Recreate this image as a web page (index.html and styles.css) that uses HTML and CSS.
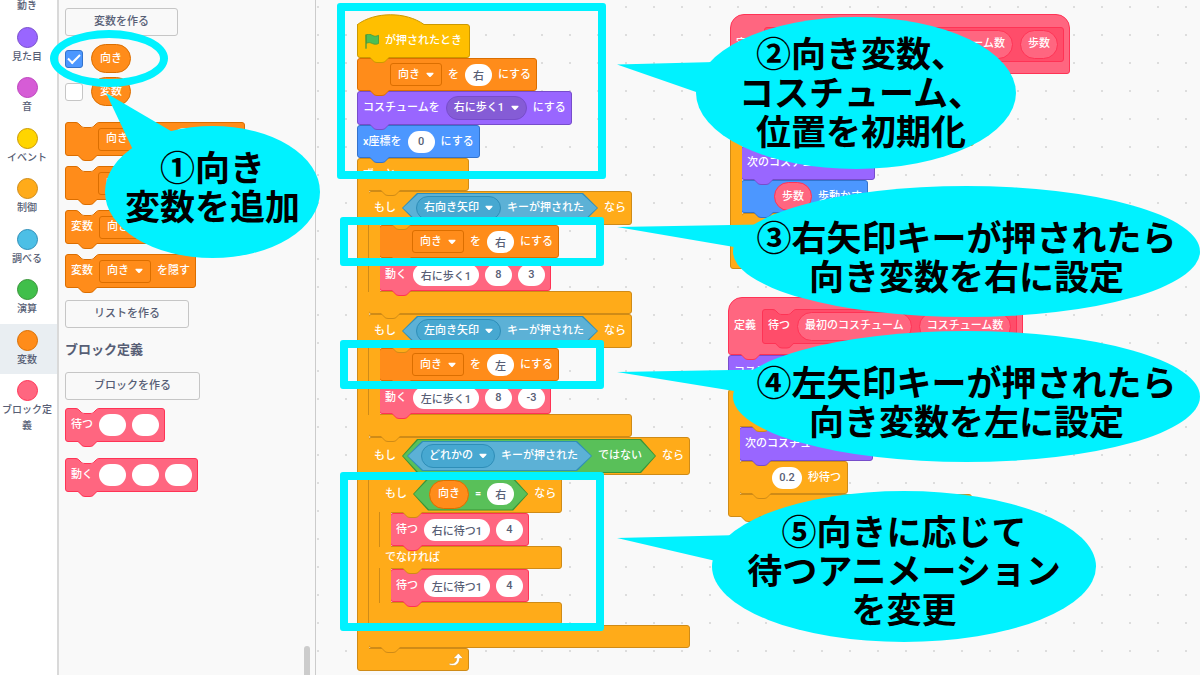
FILE: index.html
```html
<!DOCTYPE html>
<html lang="ja">
<head>
<meta charset="utf-8">
<meta name="viewport" content="width=device-width, initial-scale=1">
<title>変数とブロック定義</title>
<link rel="stylesheet" href="styles.css">
</head>
<body>
<svg class="defs" aria-hidden="true">
  <symbol id="arrow" viewBox="0 0 8 6"><path d="M1.2.8h5.6c.8 0 1 .7.5 1.200L4.700 4.700c-.4.4-1 .4-1.400 0L.7 2C.2 1.500.4.8 1.200.8z" fill="#fff"/></symbol>
  <symbol id="notch" viewBox="0 0 24 7"><path d="M0 0C2 0 3 1 4 2L6 4C7 5 8 6 10 6H15C17 6 18 5 19 4L21 2C22 1 23 .5 24 .5V0Z" fill="var(--hole)"/><path d="M0 .5C2 .5 3 1 4 2L6 4C7 5 8 5.500 10 5.500H15C17 5.500 18 5 19 4L21 2C22 1 23 .5 24 .5" fill="none" stroke="var(--line)"/></symbol>
</svg>
<div class="app">
  <nav class="categories">
    <a class="category" href="#motion"><span class="dot motion"></span>動き</a>
    <a class="category" href="#looks"><span class="dot looks"></span>見た目</a>
    <a class="category" href="#sound"><span class="dot sound"></span>音</a>
    <a class="category" href="#events"><span class="dot event"></span>イベント</a>
    <a class="category" href="#control"><span class="dot control"></span>制御</a>
    <a class="category" href="#sensing"><span class="dot sense"></span>調べる</a>
    <a class="category" href="#operators"><span class="dot operator"></span>演算</a>
    <a class="category selected" href="#data"><span class="dot data"></span>変数</a>
    <a class="category" href="#custom"><span class="dot custom"></span>ブロック定義</a>
  </nav>

  <aside class="palette">
    <button class="make" type="button">変数を作る</button>
    <div class="variables">
      <label class="variable"><input class="tick" type="checkbox" checked><span class="reporter data">向き</span></label>
      <label class="variable"><input class="tick" type="checkbox"><span class="reporter data">変数</span></label>
    </div>
    <div class="data-blocks">
      <div class="block data icon-space set"><svg class="notch"><use href="#notch"/></svg><span class="drop"><select aria-label="変数名"><option>向き</option></select><svg><use href="#arrow"/></svg></span><input class="slot" aria-label="値"></div>
      <div class="block data icon-space set"><svg class="notch"><use href="#notch"/></svg><span class="drop"><select aria-label="変数名"><option>向き</option></select><svg><use href="#arrow"/></svg></span></div>
      <div class="block data"><svg class="notch"><use href="#notch"/></svg><span>変数</span><span class="drop"><select aria-label="変数名"><option>向き</option></select><svg><use href="#arrow"/></svg></span></div>
      <div class="block data"><svg class="notch"><use href="#notch"/></svg><span>変数</span><span class="drop"><select aria-label="変数名"><option>向き</option></select><svg><use href="#arrow"/></svg></span><span>を隠す</span></div>
    </div>
    <button class="make" type="button">リストを作る</button>
    <h2 class="heading">ブロック定義</h2>
    <button class="make" type="button">ブロックを作る</button>
    <div class="custom-blocks">
      <div class="block custom"><svg class="notch"><use href="#notch"/></svg><span>待つ</span><input class="slot" aria-label="最初のコスチューム"><input class="slot" aria-label="コスチューム数"></div>
      <div class="block custom"><svg class="notch"><use href="#notch"/></svg><span>動く</span><input class="slot" aria-label="最初のコスチューム"><input class="slot" aria-label="コスチューム数"><input class="slot" aria-label="歩数"></div>
    </div>
    <span class="scrollbar"></span>
  </aside>

  <main class="workspace">
    <section class="script script-main">
      <div class="hat">
        <svg class="dome" viewBox="0 0 68 11"><path d="M.5 11V10.500C18-2.500 49-2.500 67 10.500V11Z" fill="#ffbf00"/><path d="M.5 11V10.500C18-2.500 49-2.500 67 10.500" fill="none" stroke="#cc9900"/></svg>
        <div class="block event"><svg class="flag" viewBox="0 0 14 15"><path d="M1 1C4-.5 6 .5 8 1.700c2 .8 3.500.6 5.500-.4v8.200c-2 1-4 1-6 .1-2-1-4-1.500-6-.3z" fill="#4cbf56" stroke="#45993d" stroke-width=".8"/><path d="M1 .8v13.400" stroke="#45993d" stroke-width="1.300" stroke-linecap="round"/></svg><span>が押されたとき</span></div>
      </div>
      <div class="block data icon-space"><span class="drop"><select aria-label="変数名"><option>向き</option></select><svg><use href="#arrow"/></svg></span><span>を</span><input class="slot" aria-label="値" value="右"><span>にする</span></div>
      <div class="block looks"><span>コスチュームを</span><span class="drop round"><select aria-label="コスチューム"><option>右に歩く1</option></select><svg><use href="#arrow"/></svg></span><span>にする</span></div>
      <div class="block motion"><span>x座標を</span><input class="slot" aria-label="x座標" value="0"><span>にする</span></div>

      <div class="wrap control">
        <div class="block control head"><span>ずっと</span></div>
        <div class="inside">
          <div class="wrap control">
            <div class="block control head if"><span>もし</span><span class="hex sense"><span class="drop round"><select aria-label="キー"><option>右向き矢印</option></select><svg><use href="#arrow"/></svg></span><span>キーが押された</span></span><span>なら</span></div>
            <div class="inside">
              <div class="block data icon-space"><span class="drop"><select aria-label="変数名"><option>向き</option></select><svg><use href="#arrow"/></svg></span><span>を</span><input class="slot" aria-label="値" value="右"><span>にする</span></div>
              <div class="block custom"><span>動く</span><input class="slot wide" aria-label="最初のコスチューム" value="右に歩く1"><input class="slot" aria-label="コスチューム数" value="8"><input class="slot" aria-label="歩数" value="3"></div>
            </div>
            <div class="block control foot"></div>
          </div>
          <div class="wrap control">
            <div class="block control head if"><span>もし</span><span class="hex sense"><span class="drop round"><select aria-label="キー"><option>左向き矢印</option></select><svg><use href="#arrow"/></svg></span><span>キーが押された</span></span><span>なら</span></div>
            <div class="inside">
              <div class="block data icon-space"><span class="drop"><select aria-label="変数名"><option>向き</option></select><svg><use href="#arrow"/></svg></span><span>を</span><input class="slot" aria-label="値" value="左"><span>にする</span></div>
              <div class="block custom"><span>動く</span><input class="slot wide" aria-label="最初のコスチューム" value="左に歩く1"><input class="slot" aria-label="コスチューム数" value="8"><input class="slot" aria-label="歩数" value="-3"></div>
            </div>
            <div class="block control foot"></div>
          </div>
          <div class="wrap control">
            <div class="block control head tall"><span>もし</span><span class="hex operator nest"><span class="hex sense"><span class="drop round"><select aria-label="キー"><option>どれかの</option></select><svg><use href="#arrow"/></svg></span><span>キーが押された</span></span><span>ではない</span></span><span>なら</span></div>
            <div class="inside">
              <div class="wrap control">
                <div class="block control head tall"><span>もし</span><span class="hex operator compare"><span class="reporter data">向き</span><span>=</span><input class="slot" aria-label="比較する値" value="右"></span><span>なら</span></div>
                <div class="inside">
                  <div class="block custom"><span>待つ</span><input class="slot wide" aria-label="最初のコスチューム" value="右に待つ1"><input class="slot" aria-label="コスチューム数" value="4"></div>
                </div>
                <div class="block control foot else"><span>でなければ</span></div>
                <div class="inside">
                  <div class="block custom"><span>待つ</span><input class="slot wide" aria-label="最初のコスチューム" value="左に待つ1"><input class="slot" aria-label="コスチューム数" value="4"></div>
                </div>
                <div class="block control foot"></div>
              </div>
            </div>
            <div class="block control foot"></div>
          </div>
        </div>
        <div class="block control foot end"><svg class="loop" viewBox="0 0 14 14"><path d="M1 10.200C4.800 11.200 7.500 9.500 7.700 5.500H5.600c-.6 0-.8-.6-.4-1L8.800.8c.4-.4.9-.4 1.200 0l3.300 3.700c.4.5.2 1-.5 1h-2.200C10.500 11 6.600 13.500 1.800 12.300.8 12 0 11.500 0 10.900c0-.5.4-.8 1-.7z" fill="#fff" stroke="#cf8b17" stroke-width=".5"/></svg></div>
      </div>
    </section>

    <section class="script script-walk">
      <div class="block custom define"><span>定義</span><div class="block custom proto"><svg class="notch"><use href="#notch"/></svg><span class="reporter custom">コスチューム数</span><span class="reporter custom">歩数</span></div></div>
      <div class="block looks"></div>
      <div class="wrap control">
        <div class="block control head tall repeat"></div>
        <div class="inside">
          <div class="block looks"><span>次のコスチュームにする</span></div>
          <div class="block motion icon-space"><span class="reporter custom">歩数</span><span>歩動かす</span></div>
          <div class="block control wait"></div>
        </div>
        <div class="block control foot"></div>
      </div>
    </section>

    <section class="script script-wait">
      <div class="block custom define"><span>定義</span><div class="block custom proto"><svg class="notch"><use href="#notch"/></svg><span>待つ</span><span class="reporter custom">最初のコスチューム</span><span class="reporter custom">コスチューム数</span></div></div>
      <div class="block looks"><span>コスチュームを</span></div>
      <div class="wrap control">
        <div class="block control head tall repeat"></div>
        <div class="inside">
          <div class="block looks"><span>次のコスチュームにする</span></div>
          <div class="block control icon-space wait"><input class="slot decimal" aria-label="秒数" value="0.2"><span>秒待つ</span></div>
        </div>
        <div class="block control foot"></div>
      </div>
    </section>
  </main>

  <div class="mark ring"></div>
  <div class="mark frame frame-start"></div>
  <div class="mark frame frame-right"></div>
  <div class="mark frame frame-left"></div>
  <div class="mark frame frame-wait"></div>

  <svg class="tails" viewBox="0 0 1200 675" aria-hidden="true">
    <path d="M106 93L176 134L134 152Z"/>
    <path d="M617 64.500L715 62V93H699Z"/>
    <path d="M617 227L760 224.500L740 248Z"/>
    <path d="M617 372L760 369.500L740 392Z"/>
    <path d="M617 538L740 535L720 562Z"/>
  </svg>
  <p class="mark callout callout-1">①向き<br>変数を追加</p>
  <p class="mark callout callout-2">②向き変数、<br>コスチューム、<br>位置を初期化</p>
  <p class="mark callout callout-3">③右矢印キーが押されたら<br>向き変数を右に設定</p>
  <p class="mark callout callout-4">④左矢印キーが押されたら<br>向き変数を左に設定</p>
  <p class="mark callout callout-5">⑤向きに応じて<br>待つアニメーション<br>を変更</p>
</div>
</body>
</html>
```
FILE: styles.css
```css
* { box-sizing: border-box; }

body {
  margin: 0;
  color: #575e75;
  font-family: Roboto, "Noto Sans CJK JP", sans-serif;
  font-size: 11px;
  font-weight: 500;
  line-height: 16px;
}

input, select, button { font: inherit; color: inherit; margin: 0; }

.defs { position: absolute; width: 0; height: 0; }

.app {
  position: relative;
  display: flex;
  height: 100vh;
  overflow: hidden;
}

/* block colours */
.motion { --fill: #4c97ff; --line: #3373cc; }
.looks { --fill: #9966ff; --line: #774dcb; --drop: #855cd6; }
.sound { --fill: #d65cd6; --line: #bd42bd; }
.event { --fill: #ffbf00; --line: #cc9900; }
.control { --fill: #ffab19; --line: #cf8b17; }
.sense { --fill: #5cb1d6; --line: #2e8eb8; --drop: #47a8d1; }
.operator { --fill: #59c059; --line: #389438; }
.data { --fill: #ff8c1a; --line: #db6e00; --drop: #ff8c1a; }
.custom { --fill: #ff6680; --line: #ff3355; }
.dot.event { --fill: #ffd500; }
.dot.sense { --fill: #4cbfe6; }
.dot.operator { --fill: #40bf4a; }

/* categories */
.categories {
  flex: none;
  width: 59px;
  margin-top: -30px;
  border-right: 2px solid #d9d9d9;
  background: #fff;
}
.category {
  display: flex;
  flex-direction: column;
  align-items: center;
  gap: 1px;
  min-height: 50px;
  padding: 6px 3px 0 0;
  color: #575e75;
  font-size: 10px;
  text-align: center;
  text-decoration: none;
}
.category:nth-child(odd) { min-height: 51px; }
.category.selected { background: #e9eef2; }
.dot {
  flex: none;
  width: 21px;
  height: 21px;
  border: 1px solid var(--line);
  border-radius: 50%;
  background: var(--fill);
}

/* palette */
.palette {
  --hole: #f9f9f9;
  position: relative;
  flex: none;
  display: flex;
  flex-direction: column;
  align-items: flex-start;
  width: 257px;
  padding: 8px 6px;
  border-right: 1px solid #ccc;
  background: #f9f9f9;
}
.make {
  height: 28px;
  padding: 0 28px;
  border: 1px solid #c6c6c6;
  border-radius: 3px;
  background: transparent;
}
.variables { display: grid; gap: 4px; margin: 8px 0 16px; }
.variable { display: flex; align-items: center; gap: 8px; }
.tick {
  appearance: none;
  display: grid;
  place-items: center;
  width: 18px;
  height: 18px;
  border: 1px solid #c6c6c6;
  border-radius: 3px;
  background: #fff;
}
.tick:checked { border-color: #3373cc; background: #4c97ff; }
.tick:checked::after {
  content: "";
  width: 10px;
  height: 5px;
  margin-bottom: 3px;
  border: solid #fff;
  border-width: 0 0 2px 2px;
  transform: rotate(-45deg);
}
.data-blocks { display: grid; gap: 10px; margin-bottom: 12px; }
.custom-blocks { display: grid; gap: 16px; margin-top: 8px; }
.palette .block { height: 34px; }
.palette .set { width: 180px; }
.palette .set .slot { margin-left: 17px; }
.heading { margin: 13px 0 11px; font-size: 13px; font-weight: 700; line-height: 18px; padding-bottom: 2px; }
.scrollbar {
  position: absolute;
  right: 5px;
  bottom: 0;
  width: 6px;
  height: 29px;
  border-radius: 3px 3px 0 0;
  background: #ccc;
}

/* workspace */
.workspace {
  position: relative;
  flex: 1;
  background: #f9f9f9 radial-gradient(circle at 2px 7px, #ddd 1px, transparent 1px) 0 0 / 28px 28px;
}
.script { position: absolute; }
.script-main { left: 41px; top: 14px; }
.script-walk { left: 414px; top: 14px; }
.script-wait { left: 412px; top: 297px; }

/* blocks */
.block {
  position: relative;
  display: flex;
  align-items: center;
  gap: 6px;
  width: max-content;
  height: 33px;
  padding: 0 5px;
  border: 1px solid var(--line);
  border-radius: 3px;
  background: var(--fill);
  color: #fff;
  white-space: nowrap;
}
.block.looks { height: 34px; min-width: 134px; }
.block.icon-space { padding-left: 32px; }
.block.wait { min-width: 109px; }

/* the connector under each block: outline first, then the fill one pixel higher */
.block::before,
.block::after {
  content: "";
  position: absolute;
  z-index: 2;
  left: 9px;
  bottom: -6px;
  width: 24px;
  height: 6px;
  background: var(--line);
  clip-path: path("M0 0C2 0 3 1 4 2L6 4C7 5 8 6 10 6H15C17 6 18 5 19 4L21 2C22 1 23 0 24 0Z");
}
.block::after { bottom: -5px; background: var(--fill); }
.notch { position: absolute; left: 9px; top: -1px; width: 24px; height: 7px; }

.hat .block { height: 34px; min-width: 112px; padding: 0 7px; border-top-left-radius: 0; }
.dome { position: relative; z-index: 1; display: block; width: 68px; height: 11px; margin-bottom: -1px; }
.flag { width: 14px; height: 15px; }

.wrap { display: grid; width: max-content; }
.head, .foot { width: 100%; min-width: 112px; }
.head::before, .head::after, .else::before, .else::after { left: 20px; }
.head { border-bottom-left-radius: 0; }
.head.if { height: 34px; }
.head.tall { height: 38px; }
.head.repeat { min-width: 244px; }
.foot { height: 23px; border-top-left-radius: 0; }
.else { border-bottom-left-radius: 0; }
.end { justify-content: flex-end; }
.end::before, .end::after { display: none; }
.loop { width: 14px; height: 14px; }
.inside {
  position: relative;
  display: flex;
  flex-direction: column;
  align-items: flex-start;
  width: 0;
  min-width: 100%;
  padding-left: 11px;
}
.inside::before {
  content: "";
  position: absolute;
  z-index: 1;
  left: 0;
  top: -1px;
  bottom: -1px;
  width: 11px;
  border-left: 1px solid var(--line);
  background: var(--fill);
}

.define { height: 60px; border-radius: 14px 14px 3px 3px; }
.script-wait .define { height: 58px; }
.proto { --fill: #ff4d6a; --hole: #ff6680; height: 35px; gap: 7px; }
.proto .reporter { --fill: #ff6680; }
.script-walk .proto { width: 300px; justify-content: flex-end; }

/* things inside blocks */
.reporter {
  display: flex;
  align-items: center;
  height: 29px;
  padding: 0 8px;
  border: 1px solid var(--line);
  border-radius: 15px;
  background: var(--fill);
  color: #fff;
}
.reporter.custom { padding: 0 7px; }
.slot {
  width: 27px;
  height: 22px;
  padding: 0;
  border: 0;
  border-radius: 11px;
  background: #fff;
  color: #575e75;
  text-align: center;
}
.slot.wide { width: 66px; }
.slot.decimal { width: 30px; }

.drop { position: relative; display: flex; align-items: center; }
.drop select {
  appearance: none;
  height: 23px;
  padding: 0 21px 0 7px;
  border: 1px solid var(--line);
  border-radius: 3px;
  background: var(--drop);
}
.drop.round select { height: 24px; border-radius: 12px; }
.drop svg { position: absolute; right: 8px; width: 8px; height: 6px; pointer-events: none; }

.hex {
  position: relative;
  isolation: isolate;
  display: flex;
  align-items: center;
  gap: 6px;
  height: 30px;
  padding: 0 14px;
}
.hex::before,
.hex::after {
  content: "";
  position: absolute;
  z-index: -1;
  inset: 0;
  background: var(--line);
  clip-path: polygon(15px 0, calc(100% - 15px) 0, 100% 50%, calc(100% - 15px) 100%, 15px 100%, 0 50%);
}
.hex::after { inset: 1px; background: var(--fill); }
.hex.nest { height: 34px; padding-left: 5px; }
.hex.compare { height: 33px; padding-left: 16px; }

/* annotations drawn over the editor */
.mark { position: absolute; z-index: 4; pointer-events: none; }
.ring {
  left: 50px;
  top: 30px;
  width: 118px;
  height: 57px;
  border: 8px solid #00f2ff;
  border-radius: 50%;
}
.frame { left: 340px; width: 264px; height: 49px; border: 8px solid #00f2ff; border-radius: 3px; }
.frame-start { left: 337px; top: 3px; width: 269px; height: 176px; }
.frame-right { top: 217px; }
.frame-left { top: 340px; }
.frame-wait { top: 472px; height: 159px; }

.tails {
  position: absolute;
  z-index: 4;
  left: 0;
  top: 0;
  width: 1200px;
  height: 675px;
  fill: #00f2ff;
  pointer-events: none;
}
.callout {
  display: grid;
  place-content: center;
  margin: 0;
  border-radius: 50%;
  background: #00f2ff;
  color: #000;
  font-family: "Noto Sans CJK JP", sans-serif;
  font-size: 35px;
  font-weight: 700;
  line-height: 39px;
  text-align: center;
  white-space: nowrap;
}
.callout-1 { left: 105px; top: 126px; width: 215px; height: 132px; padding-bottom: 14px; }
.callout-2 { left: 696px; top: 17px; width: 320px; height: 152px; padding: 0 0 6px 10px; }
.callout-3 { left: 733px; top: 186px; width: 467px; height: 131px; padding-top: 7px; }
.callout-4 { left: 733px; top: 331px; width: 467px; height: 131px; padding-top: 7px; }
.callout-5 { left: 712px; top: 491px; width: 384px; height: 151px; padding-top: 4px; }
```
